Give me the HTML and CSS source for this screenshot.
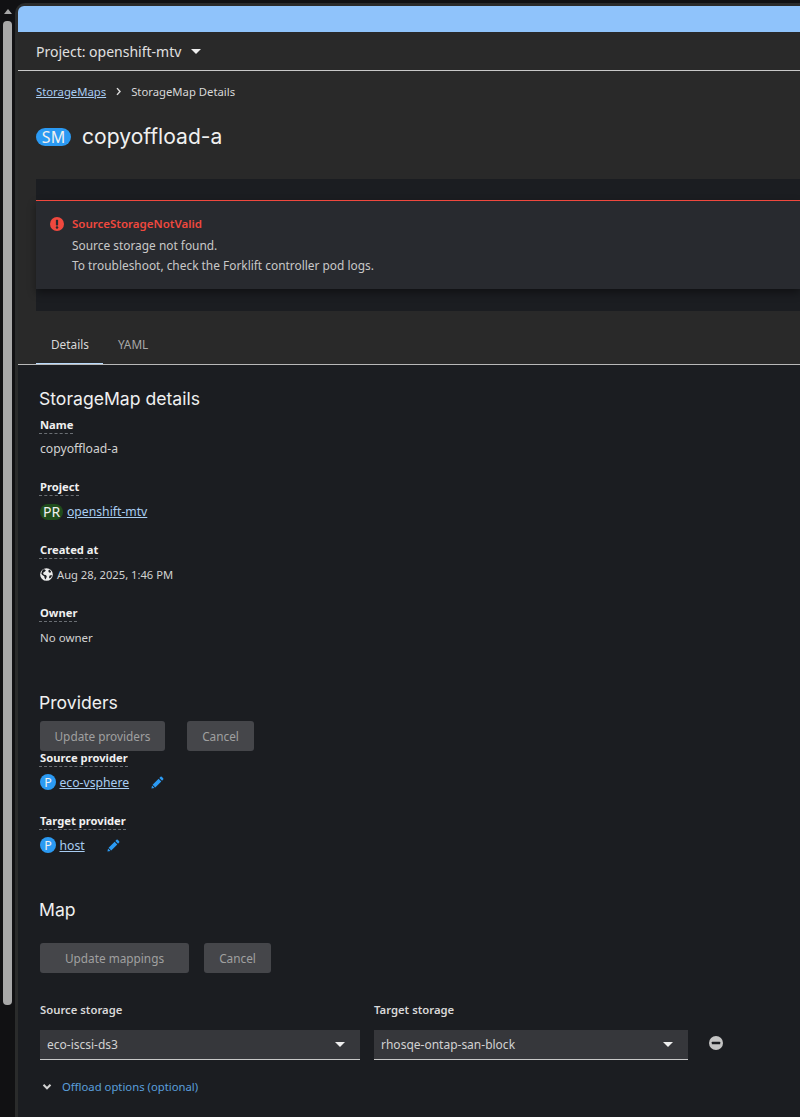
FILE: index.html
```html
<!DOCTYPE html>
<html lang="en">
<head>
  <meta charset="UTF-8">
  <title>StorageMap Details</title>
  <link rel="stylesheet" href="styles.css">
</head>
<body>
  <!-- Scrollbar of the outer window -->
  <div class="scrollbar">
    <span class="scroll-arrow"></span>
    <span class="scroll-thumb"></span>
  </div>

  <div class="frame">
    <div class="app">
      <div class="banner"></div>

      <div class="project-bar">
        <span>Project: openshift-mtv</span>
        <span class="caret"></span>
      </div>

      <div class="page-head">
        <nav class="crumbs">
          <a href="#">StorageMaps</a>
          <svg class="crumb-sep" viewBox="0 0 8 12"><path d="M2 1.500 6 6l-4 4.500" fill="none" stroke="currentColor" stroke-width="2"/></svg>
          <span>StorageMap Details</span>
        </nav>
        <h1 class="title"><span class="badge badge-sm">SM</span>copyoffload-a</h1>

        <div class="alert-well">
          <div class="alert">
            <svg class="alert-icon" viewBox="0 0 14 14"><circle cx="7" cy="7" r="7" fill="#f0483e"/><rect x="5.900" y="2.800" width="2.200" height="5.600" rx=".6" fill="#282a2e"/><circle cx="7" cy="10.400" r="1.250" fill="#282a2e"/></svg>
            <div>
              <div class="alert-title">SourceStorageNotValid</div>
              <div class="alert-body">Source storage not found.</div>
              <div class="alert-body">To troubleshoot, check the Forklift controller pod logs.</div>
            </div>
          </div>
        </div>

        <div class="tabs">
          <span class="tab active">Details</span>
          <span class="tab">YAML</span>
        </div>
      </div>

      <main class="content">
        <h2 class="section-title">StorageMap details</h2>
        <dl class="details details-first">
          <dt><span>Name</span></dt>
          <dd>copyoffload-a</dd>
          <dt><span>Project</span></dt>
          <dd><span class="badge badge-pr">PR</span><a href="#">openshift-mtv</a></dd>
          <dt><span>Created at</span></dt>
          <dd class="date">
            <svg class="globe" viewBox="0 0 14 14"><circle cx="7" cy="7" r="6.800" fill="#ececec"/><path d="M4.200 1.200 6.300 2.300 5.400 3.700 3.900 4.600 3.300 6 4.300 7.300 6 7.500 7.300 8.600 6.900 10.400 5.900 12.300 4.900 10.800 4.600 9 2.400 7.600 1.400 6.200 2.300 3zM9.800 1.600 11.900 3.600 11.300 5.200 9.700 4.800 8.900 3.300zM10.400 8 12.800 7.600 12.300 9.800 10.400 11.400 9.700 10z" fill="#1b1d21"/></svg>
            Aug 28, 2025, 1:46 PM
          </dd>
          <dt><span>Owner</span></dt>
          <dd class="tight">No owner</dd>
        </dl>

        <h2 class="section-title providers-title">Providers</h2>
        <div class="actions actions-providers">
          <button class="btn btn-wide">Update providers</button>
          <button class="btn">Cancel</button>
        </div>
        <dl class="details details-providers">
          <dt><span>Source provider</span></dt>
          <dd>
            <span class="badge badge-p">P</span><a href="#">eco-vsphere</a>
            <svg class="pencil" viewBox="0 0 14 14"><path d="M10.200.9a1 1 0 0 1 1.400 0l1.500 1.500a1 1 0 0 1 0 1.400l-1.200 1.200L9 2.100zM8.200 2.900 11.100 5.800 4.600 12.300 1.700 9.400zM1.100 10.200 3.800 12.900.5 13.500z" fill="#2b9af3"/></svg>
          </dd>
          <dt><span>Target provider</span></dt>
          <dd>
            <span class="badge badge-p">P</span><a href="#">host</a>
            <svg class="pencil" viewBox="0 0 14 14"><path d="M10.200.9a1 1 0 0 1 1.400 0l1.500 1.500a1 1 0 0 1 0 1.400l-1.200 1.200L9 2.100zM8.200 2.900 11.100 5.800 4.600 12.300 1.700 9.400zM1.100 10.200 3.800 12.900.5 13.500z" fill="#2b9af3"/></svg>
          </dd>
        </dl>

        <h2 class="section-title map-title">Map</h2>
        <div class="actions actions-map">
          <button class="btn btn-map">Update mappings</button>
          <button class="btn">Cancel</button>
        </div>

        <div class="map-grid">
          <label>Source storage</label>
          <label>Target storage</label>
          <span></span>
          <div class="select">eco-iscsi-ds3<span class="caret"></span></div>
          <div class="select">rhosqe-ontap-san-block<span class="caret"></span></div>
          <svg class="remove" viewBox="0 0 14 14"><circle cx="7" cy="7" r="7" fill="#c4c4c4"/><rect x="2.800" y="5.700" width="8.400" height="2.600" rx=".6" fill="#1b1d21"/></svg>
        </div>

        <div class="offload">
          <svg class="chev" viewBox="0 0 10 8"><path d="M1.500 1.800 5 5.300l3.500-3.500" fill="none" stroke="#d2d2d2" stroke-width="2"/></svg>
          <span>Offload options (optional)</span>
        </div>
      </main>
    </div>
  </div>
</body>
</html>
```

FILE: styles.css
```css
/* Basic reset */
html, body {
  margin: 0;
  padding: 0;
  height: 100%;
  overflow: hidden;
}
body {
  display: flex;
  background: #111113;
  font-family: "Noto Sans", "Open Sans", sans-serif;
  font-size: 12px;
  color: #d2d2d2;
}
a { color: #a9cdf2; }

/* Outer window scrollbar */
.scrollbar {
  flex: 0 0 15px;
  display: flex;
  flex-direction: column;
  align-items: center;
  padding: 9px 3px 0 3px;
  box-sizing: border-box;
}
.scroll-arrow {
  width: 0;
  height: 0;
  border-left: 4.500px solid transparent;
  border-right: 4.500px solid transparent;
  border-bottom: 5px solid #a8a8a8;
  margin-bottom: 7px;
}
.scroll-thumb {
  width: 9px;
  height: 984px;
  border-radius: 4px;
  background: #a8a8a8;
}

/* Page frame */
.frame {
  flex: 1;
  margin-top: 3px;
  padding: 3px 0 0 3px;
  background: #2a2b2b;
  border-top-left-radius: 10px;
  min-width: 0;
  overflow: hidden;
}
.app {
  height: 100%;
  background: #1b1d21;
  border-top-left-radius: 6px;
  overflow: hidden;
}
.banner {
  height: 26px;
  background: #8fc3fb;
}
.project-bar {
  height: 38px;
  display: flex;
  align-items: center;
  gap: 10px;
  padding-left: 18px;
  background: #292929;
  border-bottom: 1px solid #c8c8c8;
  font-size: 14px;
  color: #e0e0e0;
}
.caret {
  display: inline-block;
  width: 0;
  height: 0;
  border-left: 5px solid transparent;
  border-right: 5px solid transparent;
  border-top: 5px solid #eeeeee;
}

/* Header area */
.page-head {
  background: #292929;
  padding: 0 0 0 18px;
  border-bottom: 1px solid #b8b8b8;
}
.crumbs {
  height: 41px;
  display: flex;
  align-items: center;
  font-size: 11.300px;
  color: #d8d8d8;
}
.crumb-sep {
  width: 7px;
  height: 9px;
  margin: 0 9px;
  color: #d8d8d8;
}
.title {
  margin: 0;
  height: 49px;
  display: flex;
  align-items: center;
  font-family: "Inter", sans-serif;
  font-weight: 400;
  font-size: 21.100px;
  color: #f0f0f0;
}
.badge {
  display: inline-flex;
  align-items: center;
  justify-content: center;
  color: #f0f0f0;
  font-weight: 400;
  border-radius: 9px;
}
.badge-sm {
  width: 35px;
  height: 18px;
  margin-right: 11px;
  background: #2b9af3;
  font-family: "Noto Sans", sans-serif;
  font-size: 16px;
}
.alert-well {
  margin-top: 18px;
  height: 132px;
  padding-top: 21px;
  box-sizing: border-box;
  background: #1b1d21;
}
.alert {
  height: 89px;
  box-sizing: border-box;
  display: flex;
  gap: 8px;
  padding: 15px 14px;
  background: #282a2f;
  border-top: 1px solid #f0483e;
  box-shadow: 0 4px 8px rgba(0, 0, 0, .4);
}
.alert-icon {
  width: 14px;
  height: 14px;
  margin-top: 1px;
}
.alert-title {
  color: #f0483e;
  font-weight: 600;
  font-size: 11.500px;
  line-height: 16px;
  margin-bottom: 3px;
}
.alert-body {
  font-size: 11.900px;
  line-height: 20px;
  color: #c8c8c8;
}
.tabs {
  display: flex;
  height: 53px;
  align-items: flex-end;
  font-size: 11.800px;
}
.tab {
  padding: 0 15px 12px;
  color: #a8a8a8;
}
.tab.active {
  padding-right: 14px;
  color: #d8d8d8;
  box-shadow: inset 0 -1px 0 #b9dafc;
}

/* Details */
.content {
  padding: 23px 0 0 21px;
}
.section-title {
  margin: 0;
  font-family: "Inter", sans-serif;
  font-weight: 400;
  font-size: 17.600px;
  line-height: 22px;
  color: #f0f0f0;
}
.details {
  margin: 0;
}
.details-first {
  margin-top: 7px;
}
.details-first dt:first-child {
  height: 20px;
}
.details-providers {
  margin-top: -1px;
}
.details dt {
  height: 21px;
  font-weight: 700;
  font-size: 11.200px;
  color: #f0f0f0;
}
.details dt span {
  border-bottom: 1px dashed #6a6e73;
  padding: 0 0 1px 1px;
}
.details dd {
  margin: 0 0 17px 0;
  padding: 0 0 2px 1px;
  height: 23px;
  display: flex;
  align-items: center;
  font-size: 12.200px;
  color: #d2d2d2;
}
.details-providers dd {
  margin-bottom: 18px;
  height: 22px;
}
.details dd.tight { font-size: 11.500px; }
.details dd.date { font-size: 11.200px; }
.badge-pr {
  width: 23px;
  height: 16px;
  margin-right: 4px;
  background: #204d1c;
  font-size: 14px;
}
.badge-p {
  width: 16px;
  height: 16px;
  margin-right: 3.500px;
  background: #2b9af3;
  font-size: 12.500px;
}
.globe {
  width: 13px;
  height: 13px;
  margin-right: 4px;
}
.pencil {
  width: 13px;
  height: 13px;
  margin-left: 22px;
}
.btn {
  height: 30px;
  padding: 0;
  width: 67px;
  border: 0;
  border-radius: 3px;
  background: #45464a;
  color: #a0a0a0;
  font-family: inherit;
  font-size: 11.800px;
}
.btn-wide { width: 125px; }
.btn-map { width: 149px; }
.providers-title { margin-top: 41px; }
.actions {
  display: flex;
}
.actions-providers { gap: 22px; margin: 7px 0 0 1px; }
.actions-map { gap: 15px; margin: 22px 0 0 1px; }
.map-title { margin-top: 41px; }

/* Storage map rows */
.map-grid {
  margin: 30px 0 0 1px;
  display: grid;
  grid-template-columns: 320px 314px auto;
  column-gap: 14px;
  align-items: center;
}
.map-grid label {
  font-weight: 600;
  font-size: 11.300px;
  height: 27px;
  line-height: 14px;
  color: #d8d8d8;
}
.select {
  height: 28px;
  display: flex;
  align-items: center;
  justify-content: space-between;
  padding: 0 15px 1px 7px;
  background: #36373b;
  border-bottom: 1px solid #c8c8c8;
  color: #d2d2d2;
}
.remove {
  width: 14px;
  height: 14px;
  margin: 0 0 4px 7px;
}
.offload {
  display: flex;
  align-items: center;
  gap: 10px;
  margin: 19px 0 0 3px;
  font-size: 11.300px;
  color: #5a9fdc;
}
.chev {
  width: 10px;
  height: 8px;
}
```
